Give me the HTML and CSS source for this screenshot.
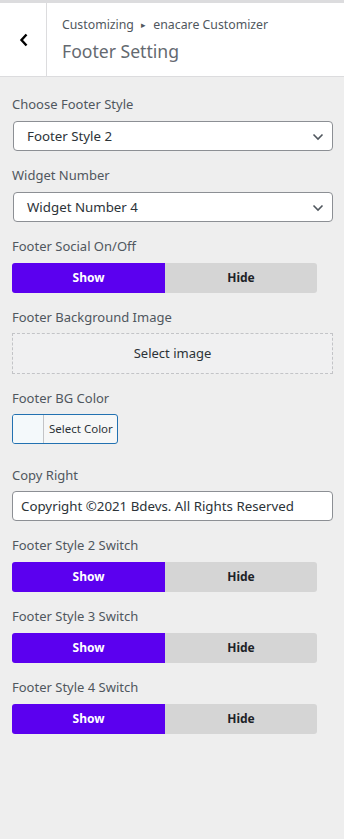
FILE: index.html
```html
<!DOCTYPE html>
<html lang="en">
<head>
    <meta charset="UTF-8">
    <meta name="viewport" content="width=device-width, initial-scale=1.0">
    <title>Footer Setting</title>
    <link rel="stylesheet" href="styles.css">
</head>
<body>
    <div class="header">
        <button class="back" type="button" aria-label="Back">
            <svg width="10" height="14" viewBox="0 0 10 14"><path d="M7.5 1.5 L2.5 7 L7.5 12.5" fill="none" stroke="#000" stroke-width="2.4"/></svg>
        </button>
        <div class="header-text">
            <div class="crumb">Customizing <span class="sep">&#9656;</span> enacare Customizer</div>
            <div class="title">Footer Setting</div>
        </div>
    </div>

    <div class="panel">
        <div class="control">
            <label class="label">Choose Footer Style</label>
            <div class="select">Footer Style 2
                <svg class="chev" width="12" height="8" viewBox="0 0 12 8"><path d="M1.5 1.5 L6 6 L10.5 1.5" fill="none" stroke="#50575e" stroke-width="1.6"/></svg>
            </div>
        </div>
        <div class="control">
            <label class="label">Widget Number</label>
            <div class="select">Widget Number 4
                <svg class="chev" width="12" height="8" viewBox="0 0 12 8"><path d="M1.5 1.5 L6 6 L10.5 1.5" fill="none" stroke="#50575e" stroke-width="1.6"/></svg>
            </div>
        </div>
        <div class="control">
            <label class="label">Footer Social On/Off</label>
            <div class="switch"><span class="on">Show</span><span class="off">Hide</span></div>
        </div>
        <div class="control tight">
            <label class="label">Footer Background Image</label>
            <div class="image-box">Select image</div>
        </div>
        <div class="control tight control-color">
            <label class="label">Footer BG Color</label>
            <div class="color-btn"><span class="swatch"></span><span class="color-text">Select Color</span></div>
        </div>
        <div class="control tight">
            <label class="label">Copy Right</label>
            <div class="input">Copyright ©2021 Bdevs. All Rights Reserved</div>
        </div>
        <div class="control">
            <label class="label">Footer Style 2 Switch</label>
            <div class="switch"><span class="on">Show</span><span class="off">Hide</span></div>
        </div>
        <div class="control">
            <label class="label">Footer Style 3 Switch</label>
            <div class="switch"><span class="on">Show</span><span class="off">Hide</span></div>
        </div>
        <div class="control">
            <label class="label">Footer Style 4 Switch</label>
            <div class="switch"><span class="on">Show</span><span class="off">Hide</span></div>
        </div>
    </div>
</body>
</html>
```
FILE: styles.css
```css
body {
    margin: 0;
    background: #eeeeee;
    font-family: "Noto Sans", "Open Sans", sans-serif;
    color: #50575e;
    height: 839px;
}
.header {
    display: flex;
    background: #ffffff;
    border-top: 3px solid #dcdcde;
    border-bottom: 1px solid #dcdcde;
    height: 73px;
}
.back {
    width: 47px;
    border: none;
    border-right: 1px solid #dcdcde;
    background: #ffffff;
    display: flex;
    align-items: center;
    justify-content: center;
    padding: 0 0 0 2px;
}
.header-text {
    padding: 12px 0 0 15px;
}
.crumb {
    font-size: 12.3px;
    line-height: 20px;
    color: #50575e;
}
.crumb .sep {
    font-size: 9px;
    margin: 0 4px;
    vertical-align: 1px;
}
.title {
    font-size: 17.6px;
    line-height: 28px;
    color: #646970;
    margin-top: 2px;
}
.panel {
    padding: 17px 11px 0 12px;
}
.control {
    margin-bottom: 14px;
}
.control-color {
    margin-bottom: 21px;
}
.label {
    display: block;
    font-size: 13px;
    line-height: 20px;
    margin-bottom: 7px;
    color: #50575e;
}
.tight .label {
    margin-bottom: 6px;
}
.select, .input {
    position: relative;
    height: 28px;
    border: 1px solid #8c8f94;
    border-radius: 4px;
    background: #ffffff;
    font-size: 13.3px;
    line-height: 28px;
    color: #2c3338;
    padding-left: 13px;
    margin-left: 1px;
}
.input {
    padding-left: 8px;
    margin-left: 0;
}
.chev {
    position: absolute;
    right: 8px;
    top: 11px;
}
.switch {
    display: flex;
    width: 305px;
    height: 30px;
    border-radius: 3px;
    overflow: hidden;
    font-size: 12px;
    font-weight: bold;
    line-height: 30px;
    text-align: center;
}
.switch .on {
    width: 153px;
    background: #5b00ef;
    color: #ffffff;
}
.switch .off {
    flex: 1;
    background: #d5d5d5;
    color: #1d2327;
}
.image-box {
    height: 39px;
    border: 1px dashed #c3c4c7;
    background: #f0f0f1;
    text-align: center;
    line-height: 39px;
    font-size: 13px;
    color: #2c3338;
}
.color-btn {
    display: flex;
    width: 104px;
    height: 28px;
    border: 1px solid #2271b1;
    border-radius: 3px;
    overflow: hidden;
    background: #f6f7f7;
}
.swatch {
    width: 30px;
    background: #f4f9fb;
    border-right: 1px solid #c3c4c7;
}
.color-text {
    flex: 1;
    font-size: 11.5px;
    line-height: 28px;
    padding-left: 5px;
    color: #2c3338;
}
```
